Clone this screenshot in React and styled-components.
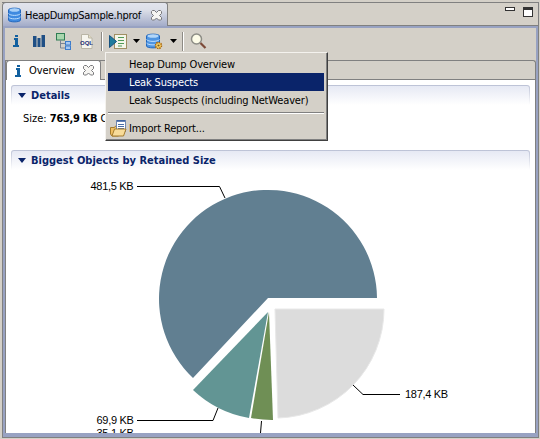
import React from "react";
import styled, { createGlobalStyle } from "styled-components";

const GlobalStyle = createGlobalStyle`
  html, body { margin: 0; padding: 0; background: #d4d0c8; }
  body {
    font-family: "DejaVu Sans Condensed", "DejaVu Sans", sans-serif;
    font-size: 11px;
    color: #000;
    overflow: hidden;
  }
`;

const Window = styled.div`
  width: 540px;
  height: 439px;
  padding: 2px 0 0 2px;
  box-sizing: border-box;
  overflow: hidden;
  position: relative;
  background: #d4d0c8;
`;

const EditorTabs = styled.div`
  display: flex;
  justify-content: space-between;
  width: 537px;
  height: 24px;
  box-sizing: border-box;
  border-top: 1px solid #808080;
  border-right: 1px solid #808080;
  border-bottom: 1px solid #808080;
`;

const EditorTab = styled.div`
  display: flex;
  align-items: center;
  gap: 4px;
  width: 166px;
  height: 24px;
  margin-top: -1px;
  padding: 1px 5px 0;
  box-sizing: border-box;
  background: linear-gradient(#e2e4ec, #dcdfe8 30%, #a3acc9);
  border: 1px solid #808080;
  border-bottom: 0;
  border-radius: 4px 3px 0 0;
  position: relative;
  z-index: 1;
  & > span { white-space: nowrap; flex: 1; letter-spacing: -0.3px; }
`;

const WindowButtons = styled.div`
  display: flex;
  gap: 8px;
  padding: 4px 5px 0 0;
  svg { display: block; }
`;

const Frame = styled.div`
  width: 537px;
  height: 412px;
  padding: 2px 2px 4px;
  box-sizing: border-box;
  background: #98a2c2;
  border: 1px solid #808080;
  border-top: 0;
`;

const Panel = styled.div`
  height: 100%;
  background: #d4d0c8;
`;

const Toolbar = styled.div`
  display: flex;
  align-items: flex-start;
  height: 32px;
  padding-top: 3px;
  box-sizing: border-box;
`;

const ToolButton = styled.div`
  flex: none;
  width: ${(p) => p.$w}px;
  height: 20px;
  display: flex;
  align-items: center;
  justify-content: center;
  svg { display: block; }
`;

const ToolSep = styled.div`
  flex: none;
  width: 1px;
  height: 19px;
  margin: 1px ${(p) => p.$mr}px 0 ${(p) => p.$ml}px;
  background: #8d8a84;
  border-right: 1px solid #fff;
`;

const Folder = styled.div`
  height: 373px;
  box-sizing: border-box;
  border: 1px solid #808080;
  border-bottom: 0;
  border-radius: 0 3px 0 0;
`;

const InnerTabs = styled.div`
  height: 19px;
  box-sizing: border-box;
  border-bottom: 1px solid #808080;
  position: relative;
`;

const InnerTab = styled.div`
  position: absolute;
  left: 0;
  top: -1px;
  width: 95px;
  height: 20px;
  box-sizing: border-box;
  background: #fff;
  border: 1px solid #808080;
  border-bottom: 0;
  border-radius: 4px 3px 0 0;
  display: flex;
  align-items: center;
  gap: 8px;
  padding-left: 8px;
  letter-spacing: -0.1px;
  svg { display: block; flex: none; }
`;

const Content = styled.div`
  background: #fff;
  height: 353px;
  overflow: hidden;
  padding: 5px 5px 0;
  box-sizing: border-box;
`;

const SectionFrame = styled.div`
  padding: 1px 1px 0;
  border-radius: 3px 3px 0 0;
  background: linear-gradient(#bcc2d6, #fff);
`;

const SectionHead = styled.div`
  height: 19px;
  display: flex;
  align-items: center;
  gap: 5px;
  padding-left: 6px;
  border-radius: 2px 2px 0 0;
  background: linear-gradient(#e6e9f4, #fff);
  color: #0a246a;
  font-weight: bold;
`;

const Triangle = styled.span`
  width: 0;
  height: 0;
  border-left: 4px solid transparent;
  border-right: 4px solid transparent;
  border-top: 5px solid #0a246a;
`;

const SizeLine = styled.div`
  height: 45px;
  padding: 7px 0 0 12px;
  box-sizing: border-box;
  white-space: nowrap;
  b { letter-spacing: -0.3px; }
`;

const Chart = styled.svg`
  display: block;
  margin-left: -5px;
  text {
    font-family: "Liberation Sans", sans-serif;
    font-size: 11px;
    letter-spacing: -0.3px;
    fill: #000;
  }
`;

const Menu = styled.div`
  position: absolute;
  left: 105px;
  top: 52px;
  width: 223px;
  height: 89px;
  box-sizing: border-box;
  padding: 2px 3px 2px 2px;
  background: #d4d0c8;
  border: 1px solid;
  border-color: #f4f2ee #404040 #404040 #f4f2ee;
  box-shadow: inset -1px -1px 0 #808080;
`;

const MenuItem = styled.div`
  height: 18px;
  display: flex;
  align-items: center;
  padding-left: 21px;
  white-space: nowrap;
  letter-spacing: -0.15px;
  background: ${(p) => (p.$active ? "#0a246a" : "transparent")};
  color: ${(p) => (p.$active ? "#fff" : "#000")};
`;

const MenuSep = styled.div`
  margin: 3px 0;
  height: 1px;
  background: #808080;
  border-bottom: 1px solid #fff;
`;

const ImportItem = styled(MenuItem)`
  height: 22px;
  padding-left: 2px;
  gap: 2px;
  svg { flex: none; }
`;

const Close = () => (
  <svg width="11" height="11" viewBox="0 0 11 11" style={{ flex: "none" }}>
    <path d="M.5 1.500l1-1h2L5.500 2.500l2-2h2l1 1v2l-2 2 2 2v2l-1 .5h-2l-2-2-2 2h-2l-1-.5v-2l2-2-2-2z" fill="#f6f5f2" stroke="#77777a" />
  </svg>
);

const TabDb = () => (
  <svg width="13" height="16" viewBox="0 0 13 16" style={{ flex: "none" }}>
    <path d="M.5 3C.5.5 12.500.5 12.500 3v10c0 2.500-12 2.500-12 0z" fill="#3f8ae0" stroke="#2468bd" />
    <ellipse cx="6.500" cy="3" rx="5" ry="1.800" fill="#a9d0f7" />
    <path d="M.5 6.500c1.500 2.500 10.500 2.500 12 0M.5 10c1.500 2.500 10.500 2.500 12 0" fill="none" stroke="#bfe0ff" />
  </svg>
);

const InfoIcon = () => (
  <svg width="6" height="12" viewBox="0 0 6 12">
    <path d="M2 0h3v2H2zM1 3h4v7h1v2H0v-2h2V5H1z" fill="#12609f" />
  </svg>
);

const BarsIcon = () => (
  <svg width="12" height="12" viewBox="0 0 12 12">
    <path d="M0 1h3.500v11H0zM4.500 3h3v9h-3zM8.500 0H12v12H8.500z" fill="#1f4f85" />
  </svg>
);

const TreeIcon = () => (
  <svg width="15" height="17" viewBox="0 0 15 17">
    <rect x=".5" y=".5" width="8" height="6.500" fill="#a9d6ae" stroke="#2f7d54" />
    <path d="M4.500 7v8H9M4.500 10.500H9" fill="none" stroke="#7a8494" />
    <rect x="9.500" y="8.500" width="5" height="3.500" fill="#a6c8f2" stroke="#3c7ccc" />
    <rect x="9.500" y="13" width="5" height="3.500" fill="#a6c8f2" stroke="#3c7ccc" />
  </svg>
);

const OqlIcon = () => (
  <svg width="15" height="15" viewBox="0 0 15 15">
    <path d="M2.500.5h7l3.500 3.500v10.500H2.500z" fill="#f6f5ee" stroke="#b9b5a6" />
    <path d="M9.500.5V4H13" fill="#e6e0c4" stroke="#b9b5a6" />
    <text x="7.500" y="10.500" textAnchor="middle" fontFamily="Liberation Sans" fontWeight="bold" fontSize="6" fill="#1d2f78">OQL</text>
  </svg>
);

const RunIcon = () => (
  <svg width="18" height="15" viewBox="0 0 18 15">
    <rect x="5.500" y=".5" width="12" height="14" fill="#f4f6ea" stroke="#a08f62" />
    <path d="M9 3.500h6M9 6.500h6M9 9.500h6M9 12h4" stroke="#4f9a58" />
    <path d="M.5 1.500L7.500 7.500.5 13.500z" fill="#1f7c9c" stroke="#17527f" />
  </svg>
);

const Arrow = () => (
  <svg width="7" height="4" viewBox="0 0 7 4"><path d="M0 0h7L3.500 4z" fill="#000" /></svg>
);

const DbGearIcon = () => (
  <svg width="17" height="17" viewBox="0 0 17 17">
    <path d="M.5 3C.5.5 13.500.5 13.500 3v10c0 2.500-13 2.500-13 0z" fill="#4f95e2" stroke="#2468bd" />
    <ellipse cx="7" cy="3" rx="5.500" ry="1.800" fill="#b3d6f8" />
    <path d="M.5 6.500c1.500 2.500 11.500 2.500 13 0M.5 10c1.500 2.500 11.500 2.500 13 0" fill="none" stroke="#bfe0ff" />
    <circle cx="12.500" cy="12.500" r="3" fill="#fbd76a" stroke="#a8650f" strokeWidth="1.500" strokeDasharray="1.500 .8" />
    <circle cx="12.500" cy="12.500" r="1.100" fill="#7a5a20" />
  </svg>
);

const SearchIcon = () => (
  <svg width="17" height="16" viewBox="0 0 17 16">
    <circle cx="6.500" cy="6" r="5" fill="#fdfce8" stroke="#8d8d86" strokeWidth="1.500" />
    <path d="M10.500 10l5 5" stroke="#7c4a38" strokeWidth="2.200" />
  </svg>
);

const ImportIcon = () => (
  <svg width="17" height="17" viewBox="0 0 17 17">
    <path d="M.5 7.500h4l1-1.500h3v10H2L.5 14z" fill="#f0c064" stroke="#a57c2e" />
    <rect x="6.500" y=".5" width="9" height="11" fill="#fff" stroke="#6f86b0" />
    <path d="M7 1h8" stroke="#31589c" strokeWidth="1.500" />
    <path d="M8 4.500h6M8 6.500h6M8 8.500h6" stroke="#4a6ea8" />
    <path d="M2 16l2.500-7h11.500l-2.500 7z" fill="#f8dc9a" stroke="#a57c2e" />
  </svg>
);

const PieChart = () => (
  <Chart width="529" height="263" viewBox="6 170 529 263">
    <path d="M268 298H377A109 109 0 1 0 193 378Z" fill="#617f91" />
    <path d="M275 309H384A109 109 0 0 1 278 418Z" fill="#dcdcdc" stroke="#e8e8e8" />
    <path d="M268 312L193 390A108 108 0 0 0 249 418Z" fill="#629594" />
    <path d="M269 312L251 418A108 108 0 0 0 273 420Z" fill="#6f8f55" />
    <path d="M137 186.500H219.500L225 198" fill="none" stroke="#000" />
    <path d="M353 385L363 394.500H400" fill="none" stroke="#000" />
    <path d="M137 420.500H213L218 408" fill="none" stroke="#000" />
    <path d="M261.500 421L260.500 433" fill="none" stroke="#000" />
    <text x="90.500" y="190">481,5 KB</text>
    <text x="405" y="398">187,4 KB</text>
    <text x="96.500" y="424">69,9 KB</text>
    <text x="96.500" y="437">35,1 KB</text>
  </Chart>
);

export default function App() {
  return (
    <Window>
      <GlobalStyle />
      <EditorTabs>
        <EditorTab>
          <TabDb />
          <span>HeapDumpSample.hprof</span>
          <Close />
        </EditorTab>
        <WindowButtons>
          <svg width="10" height="5" viewBox="0 0 10 5"><rect x=".5" y=".5" width="9" height="3" fill="#fff" stroke="#333" /></svg>
          <svg width="10" height="10" viewBox="0 0 10 10"><rect x=".5" y=".5" width="9" height="9" fill="#fff" stroke="#333" /><path d="M0 2h10" stroke="#333" strokeWidth="2" /></svg>
        </WindowButtons>
      </EditorTabs>
      <Frame>
        <Panel>
          <Toolbar>
            <ToolButton $w={21}><InfoIcon /></ToolButton>
            <ToolButton $w={26}><BarsIcon /></ToolButton>
            <ToolButton $w={23}><TreeIcon /></ToolButton>
            <ToolButton $w={22}><OqlIcon /></ToolButton>
            <ToolSep $ml={4} $mr={3} />
            <ToolButton $w={23}><RunIcon /></ToolButton>
            <ToolButton $w={14}><Arrow /></ToolButton>
            <ToolButton $w={22}><DbGearIcon /></ToolButton>
            <ToolButton $w={16}><Arrow /></ToolButton>
            <ToolSep $ml={1} $mr={2} />
            <ToolButton $w={24}><SearchIcon /></ToolButton>
          </Toolbar>
          <Folder>
            <InnerTabs>
              <InnerTab>
                <InfoIcon />
                Overview
                <Close />
              </InnerTab>
            </InnerTabs>
            <Content>
              <SectionFrame><SectionHead><Triangle />Details</SectionHead></SectionFrame>
              <SizeLine>Size: <b>763,9 KB</b> C</SizeLine>
              <SectionFrame><SectionHead><Triangle />Biggest Objects by Retained Size</SectionHead></SectionFrame>
              <PieChart />
            </Content>
          </Folder>
        </Panel>
      </Frame>
      <Menu>
        <MenuItem>Heap Dump Overview</MenuItem>
        <MenuItem $active>Leak Suspects</MenuItem>
        <MenuItem>Leak Suspects (including NetWeaver)</MenuItem>
        <MenuSep />
        <ImportItem><ImportIcon />Import Report...</ImportItem>
      </Menu>
    </Window>
  );
}
